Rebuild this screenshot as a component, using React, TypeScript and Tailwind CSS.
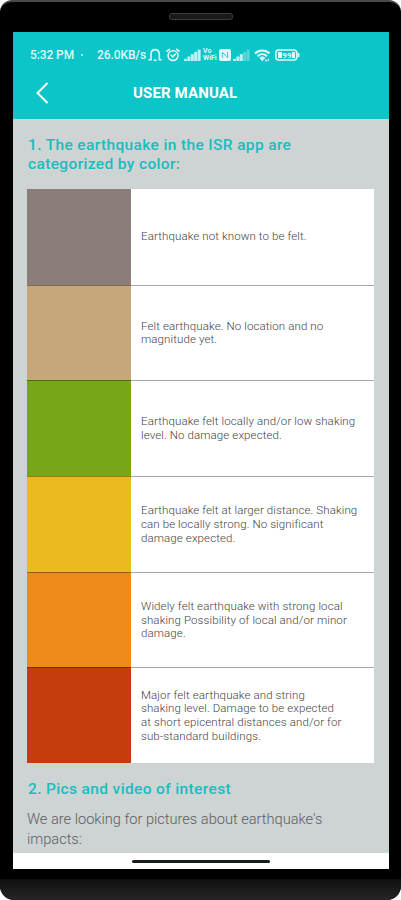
import React from 'react';

interface Level {
  color: string;
  text: string;
}

const levels: Level[] = [
  { color: 'bg-[#8b7e7a]', text: 'Earthquake not known to be felt.' },
  { color: 'bg-[#c6a67b]', text: 'Felt earthquake. No location and no\nmagnitude yet.' },
  { color: 'bg-[#77a618]', text: 'Earthquake felt locally and/or low shaking\nlevel. No damage expected.' },
  { color: 'bg-[#eaba1e]', text: 'Earthquake felt at larger distance. Shaking\ncan be locally strong. No significant\ndamage expected.' },
  { color: 'bg-[#ed8a19]', text: 'Widely felt earthquake with strong local\nshaking Possibility of local and/or minor\ndamage.' },
  { color: 'bg-[#c53d0d]', text: 'Major felt earthquake and string\nshaking level. Damage to be expected\nat short epicentral distances and/or for\nsub-standard buildings.' },
];

const SilentIcon = () => (
  <svg className="h-[14px] w-[14px]" viewBox="0 0 14 14" fill="none" stroke="currentColor" strokeWidth="1.6" strokeLinecap="round">
    <path d="M1 11.8h2V6.4C3 3.5 4.5 1.6 7 1.6s4.3 1.9 4.3 4.8v5.4H13" />
    <path d="M6.2 12.3h1.8" />
  </svg>
);

const AlarmIcon = () => (
  <svg className="h-[14px] w-[14px]" viewBox="0 0 14 14" fill="none" stroke="currentColor" strokeWidth="1.6" strokeLinecap="round">
    <circle cx="7" cy="7.6" r="4.9" />
    <path d="M1 3.2 3.3 1.4M13 3.2l-2.3-1.8M5 7.2l1.7 1.6 2.5-2.6" />
  </svg>
);

const SignalIcon = ({ strength }: { strength: number }) => (
  <svg className="h-[12px] w-[17px]" viewBox="0 0 17 12" fill="currentColor">
    {[0, 1, 2, 3, 4].map((i) => (
      <rect key={i} x={i * 3.4} y={9.8 - i * 2.3} width="3" height={2.2 + i * 2.3} opacity={i < strength ? 0.85 : 0.35} />
    ))}
  </svg>
);

const NfcIcon = () => (
  <svg className="h-[12px] w-[12px]" viewBox="0 0 12 12">
    <rect width="12" height="12" rx="2" fill="currentColor" />
    <path d="M3.4 9V3.2l5.2 5.6V3" stroke="#0bc5c8" strokeWidth=".8" fill="none" />
  </svg>
);

const WifiIcon = () => (
  <svg className="h-[13px] w-[17px]" viewBox="0 0 17 13" fill="none" stroke="currentColor" strokeWidth="2.1">
    <path d="M1 4.5c4.2-4 10.3-4 14.5 0M3.5 7.2c2.8-2.6 6.7-2.6 9.5 0M6 9.6c1.4-1.2 3.2-1.2 4.6 0" />
    <path d="m6.5 9.8 1.8 2.6 1.8-2.6z" fill="currentColor" stroke="none" />
    <path d="M12 12.7v-2.4M14.3 9.8v2.4" strokeWidth="1.2" />
  </svg>
);

const BatteryIcon = () => (
  <svg className="h-[12px] w-[25px]" viewBox="0 0 25 12" fill="none" stroke="currentColor">
    <rect x=".8" y="1" width="21" height="10" rx="3" strokeWidth="1.6" />
    <rect x="3" y="3" width="4" height="6" fill="currentColor" stroke="none" />
    <rect x="17" y="3" width="3" height="6" fill="currentColor" stroke="none" />
    <path d="M23.5 4v4" strokeWidth="1.8" />
    <text x="7.3" y="8.9" fontSize="8" fontWeight="700" fill="currentColor" stroke="none">99</text>
  </svg>
);

const StatusBar = () => (
  <div className="flex h-[46px] items-center pl-[17px] text-[12px] font-medium text-[#dffafa]">
    <span className="w-[46px] tracking-[-0.1px]">5:32 PM</span>
    <span className="ml-[5px] h-[2px] w-[2px] rounded-full bg-current" />
    <span className="ml-[14px] w-[51px] tracking-[-0.1px]">26.0KB/s</span>
    <SilentIcon />
    <span className="ml-[4px] flex"><AlarmIcon /></span>
    <span className="ml-[4px] flex"><SignalIcon strength={5} /></span>
    <span className="ml-[2px] flex w-[16px] flex-col text-[7px] font-bold">
      <span className="h-[7px] leading-[7px]">Vo</span>
      <span className="h-[7px] leading-[7px]">WiFi</span>
    </span>
    <NfcIcon />
    <span className="ml-[2px] flex"><SignalIcon strength={3} /></span>
    <span className="ml-[4px] flex"><WifiIcon /></span>
    <span className="ml-[4px] flex"><BatteryIcon /></span>
  </div>
);

export default function App() {
  return (
    <div className="h-[900px] w-[401px] overflow-hidden bg-white font-['Roboto',sans-serif]">
      <div className="flex h-full flex-col overflow-hidden rounded-t-[12px] rounded-b-[14px] border-t-2 border-[#4a4a4a] bg-black">
        <div className="flex h-[30px] shrink-0 justify-center pt-[11px]">
          <div className="h-[7px] w-[64px] rounded-[3px] border border-[#3c3c3c] bg-[#191919]" />
        </div>

        <div className="mr-[12px] ml-[13px] flex h-[837px] shrink-0 flex-col bg-[#ced3d4]">
          <header className="h-[87px] shrink-0 bg-[#0bc5c8]">
            <StatusBar />
            <div className="flex h-[30px] items-center text-white">
              <svg className="ml-[23px] h-[22px] w-[13px]" viewBox="0 0 13 22" fill="none" stroke="currentColor" strokeWidth="2">
                <path d="M11.5 1 1.5 11l10 10" />
              </svg>
              <h1 className="ml-[84px] text-[15px] font-bold tracking-[0.14px] whitespace-nowrap">USER MANUAL</h1>
            </div>
          </header>

          <main className="flex h-[734px] shrink-0 flex-col overflow-hidden pl-[14px]">
            <h2 className="mt-[17px] pl-[1px] text-[15.5px] leading-[19px] font-medium tracking-[0.36px] whitespace-pre-line text-[#19bdbf]">
              {'1. The earthquake in the ISR app are\ncategorized by color:'}
            </h2>

            <div className="mt-[15px] grid h-[574px] w-[347px] shrink-0 grid-rows-6 bg-white">
              {levels.map((level, index) => (
                <div key={index} className="flex">
                  <div className={`w-[104px] shrink-0 ${index > 0 ? 'border-t border-black/35' : ''} ${level.color}`} />
                  <p className={`flex flex-1 items-center pt-px pl-[10px] text-[11.5px] leading-[13.7px] font-light tracking-[0.11px] whitespace-pre text-[#444] ${index > 0 ? 'border-t border-[#a8a8a8]' : ''}`}>
                    {level.text}
                  </p>
                </div>
              ))}
            </div>

            <h2 className="mt-[17px] pl-[1px] text-[15.5px] leading-[19px] font-medium tracking-[0.36px] text-[#19bdbf]">
              2. Pics and video of interest
            </h2>
            <p className="mt-[11px] text-[14.6px] leading-[19.5px] font-light whitespace-pre-line text-[#5c6061]">
              {"We are looking for pictures about earthquake's\nimpacts:"}
            </p>
          </main>

          <div className="flex h-[16px] items-center justify-center bg-white">
            <div className="h-[3px] w-[138px] rounded-full bg-[#171d19]" />
          </div>
        </div>

        <div className="mt-[10px] grow rounded-b-[14px] bg-gradient-to-b from-[#101010] to-[#252525]" />
      </div>
    </div>
  );
}
